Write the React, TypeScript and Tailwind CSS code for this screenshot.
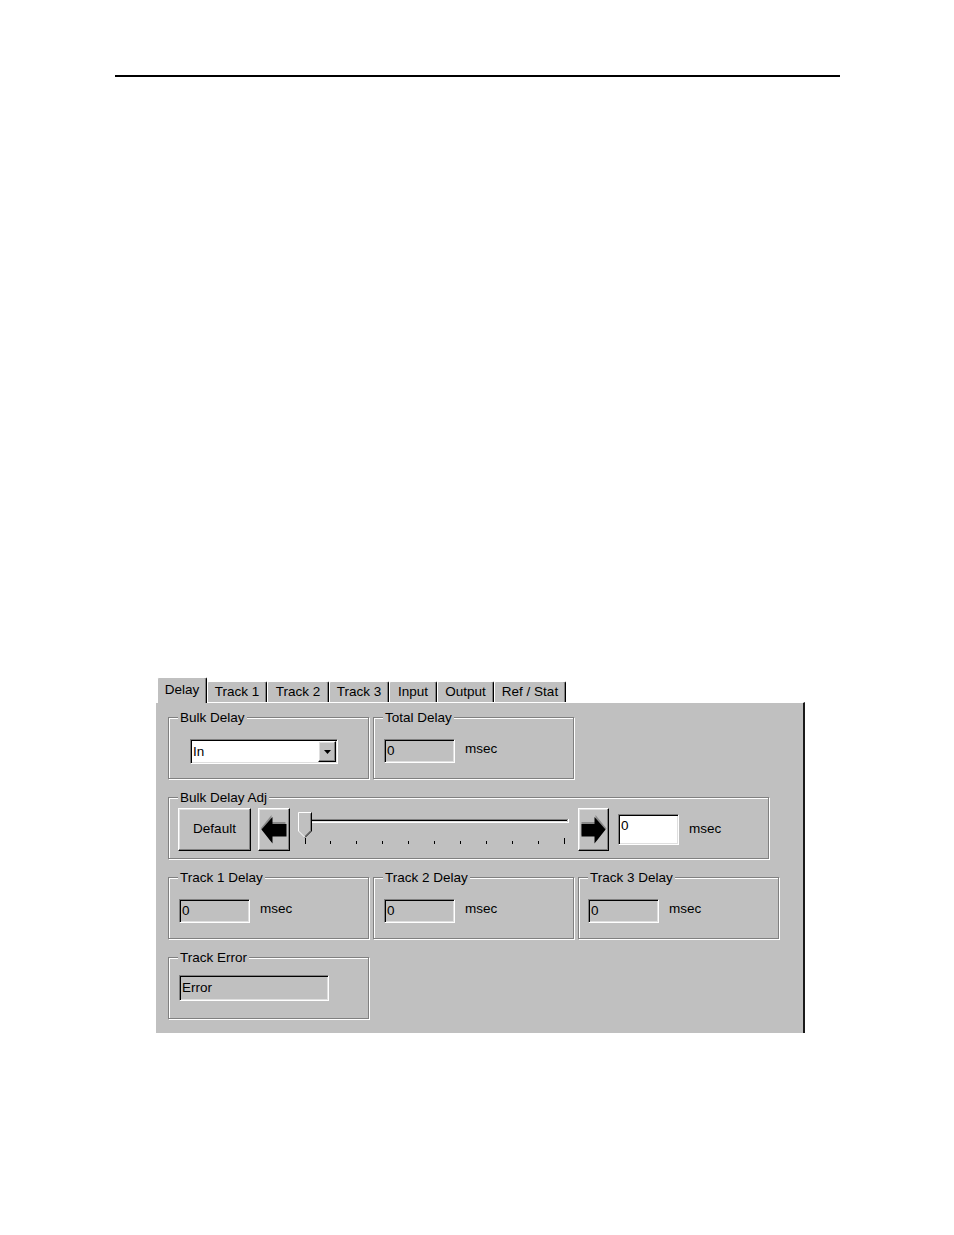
import type { ReactNode } from "react";

const tabs = [
  { label: "Delay", w: "w-[50px]", active: true },
  { label: "Track 1", w: "w-[60px]", active: false },
  { label: "Track 2", w: "w-[62px]", active: false },
  { label: "Track 3", w: "w-[60px]", active: false },
  { label: "Input", w: "w-[48px]", active: false },
  { label: "Output", w: "w-[57px]", active: false },
  { label: "Ref / Stat", w: "w-[72px]", active: false },
];

const raised =
  "border border-t-white border-l-white border-r-black border-b-black shadow-[inset_-1px_-1px_0_#808080,inset_1px_1px_0_#dfdfdf]";
const sunken =
  "border border-t-[#808080] border-l-[#808080] border-r-white border-b-white shadow-[inset_1px_1px_0_#000,inset_-1px_-1px_0_#dfdfdf]";

function GroupBox({ label, className, children }: { label: string; className?: string; children?: ReactNode }) {
  return (
    <div className={`relative h-[62px] border border-[#808080] shadow-[inset_1px_1px_0_#fff,1px_1px_0_#fff] ${className ?? ""}`}>
      <span className="absolute left-[9px] -top-[8px] bg-[#c0c0c0] px-[2px] leading-[16px]">{label}</span>
      {children}
    </div>
  );
}

function Field({ value, className }: { value: string; className: string }) {
  return <div className={`${sunken} flex items-center pl-[2px] leading-none ${className}`}>{value}</div>;
}

function DelayReadout({ pl }: { pl: string }) {
  return (
    <div className={`flex items-center pt-[21px] ${pl}`}>
      <Field value="0" className="w-[71px] h-[24px] bg-[#c0c0c0]" />
      <span className="ml-[10px] -mt-[4px]">msec</span>
    </div>
  );
}

function LeftArrow() {
  return (
    <svg width="26" height="30" viewBox="0 0 26 30">
      <polygon points="0,14.5 11,1 11,8 25,8 25,21 11,21 11,28" fill="#8a8a8a" transform="translate(-0.5,-1)" />
      <polygon points="0.5,14.5 11.5,2 11.5,9 25.5,9 25.5,21.5 11.5,21.5 11.5,28.5" fill="#000" />
    </svg>
  );
}

function RightArrow() {
  return (
    <svg width="26" height="30" viewBox="0 0 26 30">
      <polygon points="25,14.5 14,1 14,8 0,8 0,21 14,21 14,28" fill="#8a8a8a" transform="translate(0.5,-1)" />
      <polygon points="24.5,14.5 13.5,2 13.5,9 0.5,9 0.5,21.5 13.5,21.5 13.5,28.5" fill="#000" />
    </svg>
  );
}

function Slider() {
  const ticks = Array.from({ length: 11 }, (_, i) => 14.5 + i * 25.9);
  return (
    <svg width="288" height="43" viewBox="0 0 288 43">
      {/* channel */}
      <line x1="15" y1="11.5" x2="278" y2="11.5" stroke="#808080" />
      <line x1="16" y1="12.5" x2="277" y2="12.5" stroke="#000" />
      <line x1="16" y1="13.5" x2="277" y2="13.5" stroke="#dfdfdf" />
      <line x1="15" y1="14.5" x2="279" y2="14.5" stroke="#fff" />
      <line x1="15.5" y1="11" x2="15.5" y2="14" stroke="#808080" />
      <line x1="278.5" y1="11" x2="278.5" y2="15" stroke="#fff" />
      {ticks.map((x, i) => (
        <line
          key={i}
          x1={Math.round(x) + 0.5}
          x2={Math.round(x) + 0.5}
          y1={i === 0 || i === 10 ? 30 : 33}
          y2="36"
          stroke="#000"
        />
      ))}
      {/* thumb */}
      <polygon points="8.5,4.5 21.5,4.5 21.5,23 15,29.5 8.5,23" fill="#c0c0c0" />
      <polyline points="15,29.5 8.5,23 8.5,4.5 21.5,4.5" fill="none" stroke="#fff" />
      <polyline points="21.5,4.5 21.5,23 15,29.5" fill="none" stroke="#000" />
      <polyline points="20.5,5.5 20.5,22.5 15,28" fill="none" stroke="#808080" />
    </svg>
  );
}

export default function App() {
  return (
    <div className="w-[954px] h-[1235px] overflow-hidden bg-white text-black text-[13.5px] font-['Liberation_Sans',Arial,sans-serif]">
      <div className="ml-[115px] mt-[75px] w-[725px] h-[2px] bg-black" />

      <div className="ml-[155px] mt-[600px] w-[650px]">
        {/* tab strip */}
        <div className="flex items-end h-[25px] pl-[2px]">
          {tabs.map((t) =>
            t.active ? (
              <div
                key={t.label}
                className={`relative z-10 -mb-[1px] h-[26px] ${t.w} flex justify-center pt-[2px] bg-[#c0c0c0] rounded-t-[2px] border-l border-t border-r border-l-white border-t-white border-r-black shadow-[inset_-1px_0_0_#808080]`}
              >
                {t.label}
              </div>
            ) : (
              <div
                key={t.label}
                className={`h-[21px] ${t.w} flex items-center justify-center bg-[#c0c0c0] rounded-t-[2px] border-l border-t border-r border-l-white border-t-white border-r-black shadow-[inset_-1px_0_0_#808080]`}
              >
                {t.label}
              </div>
            )
          )}
        </div>

        {/* page */}
        <div className="h-[331px] bg-[#c0c0c0] border-t border-l border-t-white border-l-white border-r-2 border-r-[#1a1a1a] pt-[14px] pl-[12px] flex flex-col gap-[18px]">
          <div className="flex gap-[4px]">
            <GroupBox label="Bulk Delay" className="w-[201px]">
              <div className="pt-[21px] pl-[21px]">
                <div className={`${sunken} w-[148px] h-[25px] bg-white flex p-[1px]`}>
                  <span className="flex-1 flex items-center pl-[1px] pt-[2px]">In</span>
                  <div className={`${raised} w-[18px] bg-[#c0c0c0] flex items-center justify-center`}>
                    <svg width="7" height="4" viewBox="0 0 7 4">
                      <polygon points="0,0 7,0 3.5,4" fill="#000" />
                    </svg>
                  </div>
                </div>
              </div>
            </GroupBox>
            <GroupBox label="Total Delay" className="w-[201px]">
              <DelayReadout pl="pl-[10px]" />
            </GroupBox>
          </div>

          <GroupBox label="Bulk Delay Adj" className="w-[601px]">
            <div className="flex items-center h-[43px] mt-[10px] pl-[9px]">
              <div className={`${raised} w-[73px] h-[43px] flex items-center justify-center`}>Default</div>
              <div className={`${raised} ml-[7px] w-[32px] h-[43px] flex items-center justify-center`}>
                <LeftArrow />
              </div>
              <Slider />
              <div className={`${raised} w-[31px] h-[43px] flex items-center justify-center`}>
                <RightArrow />
              </div>
              <Field value="0" className="ml-[9px] w-[61px] h-[31px] bg-white items-start pt-[4px]" />
              <span className="ml-[10px]">msec</span>
            </div>
          </GroupBox>

          <div className="flex gap-[4px]">
            <GroupBox label="Track 1 Delay" className="w-[201px]">
              <DelayReadout pl="pl-[10px]" />
            </GroupBox>
            <GroupBox label="Track 2 Delay" className="w-[201px]">
              <DelayReadout pl="pl-[10px]" />
            </GroupBox>
            <GroupBox label="Track 3 Delay" className="w-[201px]">
              <DelayReadout pl="pl-[9px]" />
            </GroupBox>
          </div>

          <GroupBox label="Track Error" className="w-[201px]">
            <div className="pt-[17px] pl-[10px]">
              <Field value="Error" className="w-[150px] h-[26px] bg-[#c0c0c0]" />
            </div>
          </GroupBox>
        </div>
      </div>
    </div>
  );
}
